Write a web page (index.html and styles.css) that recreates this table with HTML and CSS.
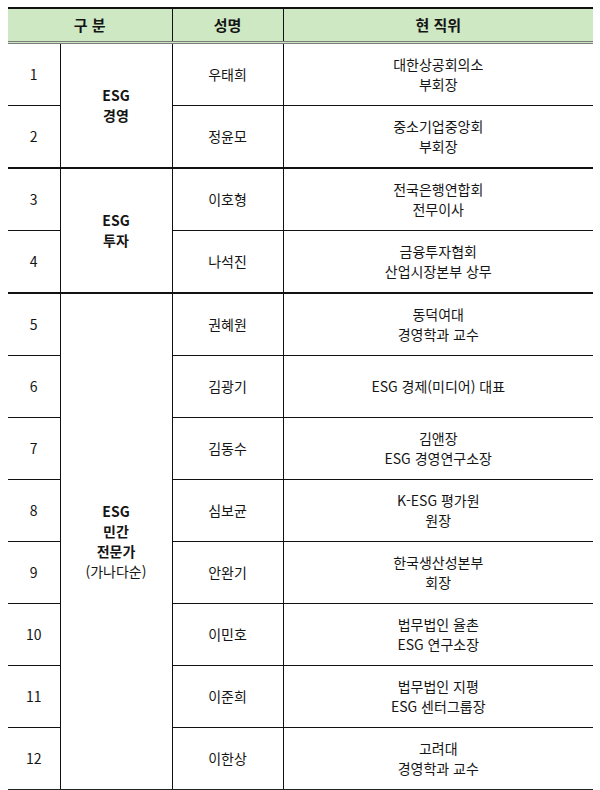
FILE: index.html
```html
<!DOCTYPE html>
<html lang="ko">
<head>
<meta charset="utf-8">
<link rel="stylesheet" href="styles.css">
</head>
<body>
<table class="roster">
  <colgroup>
    <col class="c-no"><col class="c-grp"><col class="c-name"><col class="c-pos">
  </colgroup>
  <thead>
    <tr>
      <th colspan="2">구 분</th>
      <th>성명</th>
      <th>현 직위</th>
    </tr>
  </thead>
  <tbody>
    <tr>
      <td class="no">1</td>
      <td class="grp grp-end" rowspan="2"><b>ESG<br>경영</b></td>
      <td>우태희</td>
      <td>대한상공회의소<br>부회장</td>
    </tr>
    <tr class="end">
      <td class="no">2</td>
      <td>정윤모</td>
      <td>중소기업중앙회<br>부회장</td>
    </tr>
    <tr>
      <td class="no">3</td>
      <td class="grp grp-end" rowspan="2"><b>ESG<br>투자</b></td>
      <td>이호형</td>
      <td>전국은행연합회<br>전무이사</td>
    </tr>
    <tr class="end">
      <td class="no">4</td>
      <td>나석진</td>
      <td>금융투자협회<br>산업시장본부 상무</td>
    </tr>
    <tr>
      <td class="no">5</td>
      <td class="grp" rowspan="8"><b>ESG<br>민간<br>전문가</b><br>(가나다순)</td>
      <td>권혜원</td>
      <td>동덕여대<br>경영학과 교수</td>
    </tr>
    <tr>
      <td class="no">6</td>
      <td>김광기</td>
      <td>ESG 경제(미디어) 대표</td>
    </tr>
    <tr>
      <td class="no">7</td>
      <td>김동수</td>
      <td>김앤장<br>ESG 경영연구소장</td>
    </tr>
    <tr>
      <td class="no">8</td>
      <td>심보균</td>
      <td>K-ESG 평가원<br>원장</td>
    </tr>
    <tr>
      <td class="no">9</td>
      <td>안완기</td>
      <td>한국생산성본부<br>회장</td>
    </tr>
    <tr>
      <td class="no">10</td>
      <td>이민호</td>
      <td>법무법인 율촌<br>ESG 연구소장</td>
    </tr>
    <tr>
      <td class="no">11</td>
      <td>이준희</td>
      <td>법무법인 지평<br>ESG 센터그룹장</td>
    </tr>
    <tr class="last">
      <td class="no">12</td>
      <td>이한상</td>
      <td>고려대<br>경영학과 교수</td>
    </tr>
  </tbody>
</table>
</body>
</html>
```

FILE: styles.css
```css
html, body {
  margin: 0;
  padding: 0;
  background: #ffffff;
}
body {
  padding: 7px 7px 0 8px;
  font-family: "Noto Sans CJK KR", "Noto Sans", sans-serif;
  color: #151515;
}
.roster {
  border-collapse: collapse;
  table-layout: fixed;
  width: 585px;
  font-size: 14px;
  line-height: 20px;
}
.c-no { width: 52px; }
.c-grp { width: 112px; }
.c-name { width: 111px; }
.c-pos { width: 310px; }

.roster th {
  background: #cde8c3;
  font-weight: 700;
  font-size: 15px;
  height: 32px;
  padding: 0;
  border-top: 2px solid #111;
  border-bottom: 3px double #7a7a7a;
  border-left: 1px solid #111;
  text-align: center;
  vertical-align: middle;
}
.roster th:first-child { border-left: none; }

.roster td {
  height: 59px;
  padding: 0 0 2px;
  text-align: center;
  vertical-align: middle;
  border-top: 1px solid #111;
  border-left: 1px solid #111;
}
.roster td.no { border-left: none; }
.roster tbody tr:first-child td { border-top: none; }
.roster tr.end td,
.roster td.grp-end { border-bottom: 2px solid #111; }
.roster tr.last td,
.roster td.grp:not(.grp-end) { border-bottom: 2px solid #222; }
.roster td.grp b { font-weight: 700; }
```
